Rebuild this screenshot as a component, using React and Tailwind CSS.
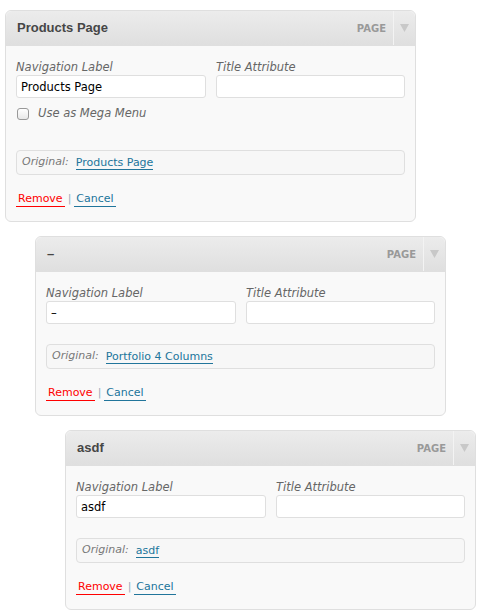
import React from "react";

const items = [
  { title: "Products Page", label: "Products Page", original: "Products Page", mega: true, indent: "ml-[5px]" },
  { title: "–", label: "–", original: "Portfolio 4 Columns", mega: false, indent: "ml-[35px]" },
  { title: "asdf", label: "asdf", original: "asdf", mega: false, indent: "ml-[65px]" },
];

function MenuItem({ item }) {
  return (
    <div className={`${item.indent} w-[411px] rounded-[6px] border border-[#dfdfdf] bg-[#f9f9f9]`}>
      <div className="flex h-[35px] items-center rounded-t-[6px] border-b border-[#dfdfdf] bg-gradient-to-b from-[#ececec] to-[#dfdfdf]">
        <div className="flex-1 pl-[11px] font-['Liberation_Sans',sans-serif] text-[13px] font-bold text-[#464646]">{item.title}</div>
        <div className="pr-[7px] text-[10px] font-bold uppercase text-[#999]">Page</div>
        <div className="flex h-full w-[22px] items-center justify-center border-l border-l-[#f3f3f3]">
          <svg width="9" height="8" viewBox="0 0 9 8">
            <path d="M0 0 L9 0 L4.5 8 Z" fill="#c8c8c8" />
          </svg>
        </div>
      </div>
      <div className="px-[10px] pt-[13px] pb-[13px]">
        <div className="grid grid-cols-[190px_189px] gap-x-[10px]">
          <div>
            <div className="h-[16px] text-[11.5px] italic leading-[16px] text-[#666]">Navigation Label</div>
            <input
              readOnly
              value={item.label}
              className="block h-[23px] w-full rounded-[3px] border border-[#dfdfdf] bg-white px-[4px] text-[11.5px] text-black outline-none"
            />
          </div>
          <div>
            <div className="h-[16px] text-[11.5px] italic leading-[16px] text-[#666]">Title Attribute</div>
            <input
              readOnly
              value=""
              className="block h-[23px] w-full rounded-[3px] border border-[#dfdfdf] bg-white px-[4px] text-[11.5px] outline-none"
            />
          </div>
        </div>
        {item.mega && (
          <div className="flex h-[32px] items-center gap-[9px] pl-[1px]">
            <span className="block h-[12px] w-[12px] rounded-[3px] border border-[#999] bg-gradient-to-b from-white to-[#e8e8e8]" />
            <span className="text-[11.5px] italic text-[#666]">Use as Mega Menu</span>
          </div>
        )}
        <div className="mt-[20px] flex h-[25px] items-center gap-[7px] rounded-[4px] border border-[#dfdfdf] bg-[#f7f7f7] px-[5px] text-[11px]">
          <span className="italic text-[#777]">Original:</span>
          <span className="border-b border-[#21759b] leading-[13px] text-[#21759b]">{item.original}</span>
        </div>
        <div className="mt-[15px] flex h-[18px] items-center text-[11px]">
          <span className="border-b border-[#f00] px-[2px] leading-[15px] text-[#f00]">Remove</span>
          <span className="px-[3px] text-[#9ab]">|</span>
          <span className="border-b border-[#21759b] px-[2px] leading-[15px] text-[#21759b]">Cancel</span>
        </div>
      </div>
    </div>
  );
}

export default function App() {
  return (
    <div className="flex min-h-[615px] w-[486px] flex-col gap-[14px] bg-white pt-[10px] font-['DejaVu_Sans',sans-serif]">
      {items.map((item, i) => (
        <MenuItem key={i} item={item} />
      ))}
    </div>
  );
}
